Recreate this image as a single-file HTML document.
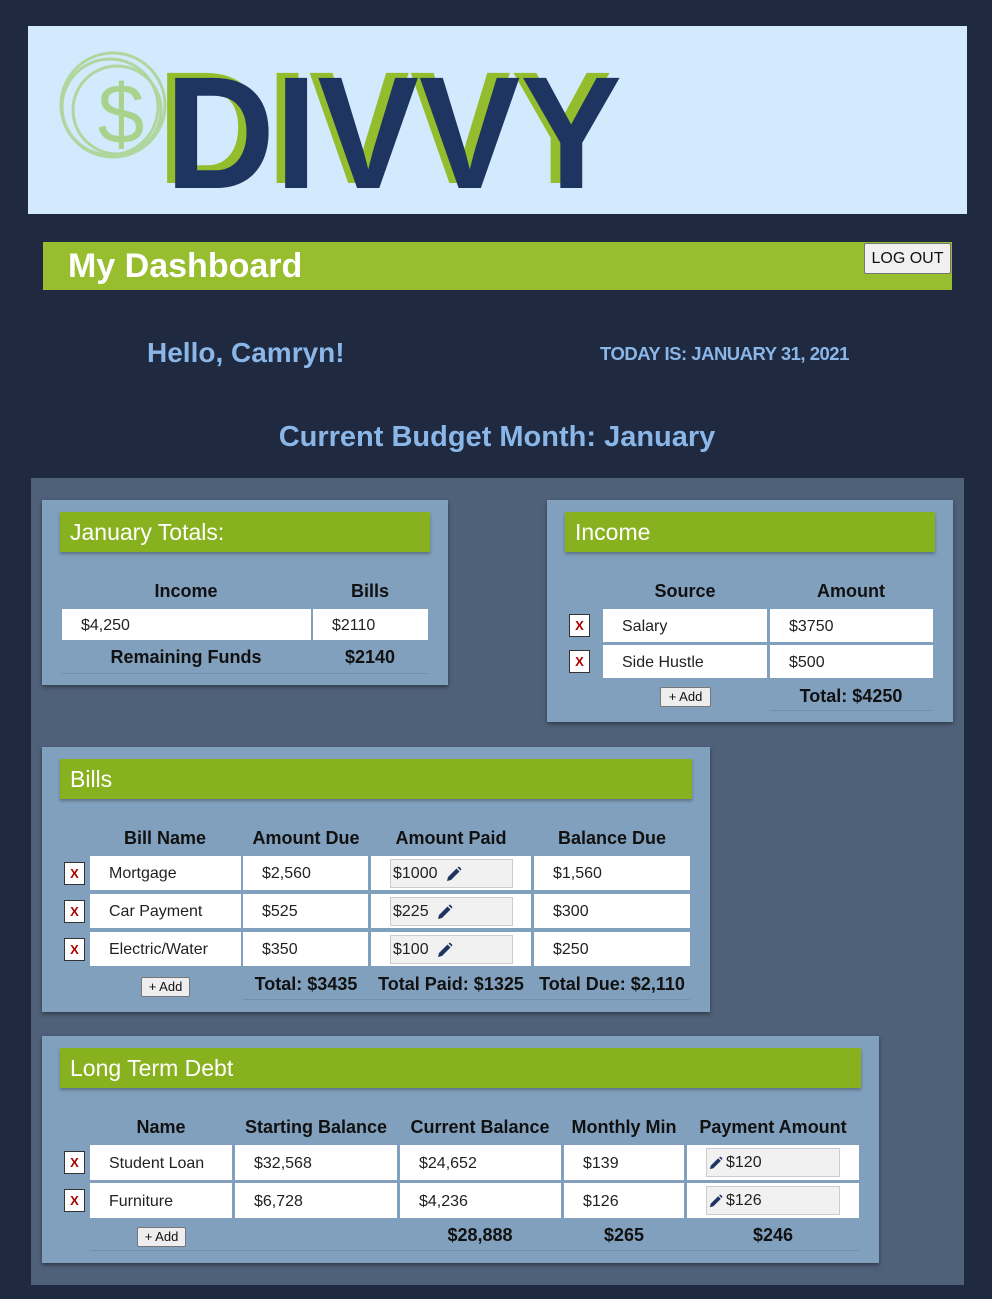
<!DOCTYPE html>
<html><head><meta charset="utf-8"><style>
*{margin:0;padding:0;box-sizing:border-box}
body{width:992px;height:1299px;background:#1f2a40;font-family:"Liberation Sans",sans-serif;position:relative;overflow:hidden}
.a{position:absolute}
.card{position:absolute;background:#81a0bd;box-shadow:0 2px 4px rgba(0,0,0,.4)}
.hd{position:absolute;background:#88b11f;color:#fff;font-size:23px;padding-left:10px;line-height:40px;box-shadow:0 2px 3px rgba(0,0,0,.3)}
.th{position:absolute;font-weight:bold;font-size:18px;color:#111;transform:translateX(-50%);white-space:nowrap}
.cell{position:absolute;background:#fff;font-size:16px;color:#222;padding-left:19px;display:flex;align-items:center;padding-top:2px}
.x{position:absolute;width:21px;height:23px;background:#fff;border:1px solid #333;color:#a00;font-size:13px;text-align:center;line-height:21px;font-weight:bold}
.btn{position:absolute;background:#eee;border:1px solid #777;border-radius:2px;font-size:13px;text-align:center;color:#111}
.inp{position:absolute;background:#f1f1f1;border:1px solid #ccc;font-size:16px;color:#222;display:flex;align-items:center;padding-left:2px}
.tot{position:absolute;font-weight:bold;font-size:18px;color:#111;transform:translateX(-50%);white-space:nowrap}
.line{position:absolute;height:1px;background:#7390ab}
svg.p{width:16px;height:16px;margin-left:8px}
</style></head><body>
<div class="a" style="left:28px;top:26px;width:939px;height:188px;background:#d3e9fd"></div>
<svg class="a" style="left:55px;top:45px" width="120" height="125" viewBox="0 0 120 125">
<g fill="none" stroke="#a9d38d" stroke-width="3" opacity=".85"><circle cx="55" cy="62" r="48"/><circle cx="62" cy="65" r="44"/><circle cx="58" cy="60" r="52"/></g>
<text x="66" y="98" font-size="84" fill="#a9d38d" text-anchor="middle" font-family="Liberation Sans">$</text></svg>
<svg class="a" style="left:0;top:0" width="992" height="220">
<text x="157" y="183" font-family="Liberation Sans" font-weight="bold" font-size="160" textLength="455" lengthAdjust="spacingAndGlyphs" fill="#93bd2c">DIVVY</text>
<text x="165" y="188" font-family="Liberation Sans" font-weight="bold" font-size="160" textLength="457" lengthAdjust="spacingAndGlyphs" fill="#1f3561">DIVVY</text>
</svg>

<div class="a" style="left:43px;top:242px;width:909px;height:48px;background:#96be2e"></div>
<div class="a" style="left:68px;top:245px;font-size:34px;font-weight:bold;color:#fff;line-height:42px">My Dashboard</div>
<div class="btn" style="left:864px;top:243px;width:87px;height:31px;font-size:16px;line-height:29px;background:#f0f0f0">LOG OUT</div>

<div class="a" style="left:147px;top:337px;font-size:28px;color:#8ab6e8;font-weight:bold">Hello, Camryn!</div>
<div class="a" style="left:600px;top:343px;font-size:18.5px;color:#8ab6e8;font-weight:bold;letter-spacing:-.5px">TODAY IS: JANUARY 31, 2021</div>
<div class="a" style="left:0;width:994px;top:421px;font-size:29px;color:#8ab6e8;text-align:center;font-weight:bold">Current Budget Month: January</div>

<div class="a" style="left:31px;top:478px;width:933px;height:807px;background:#4f6079"></div>

<!-- totals -->
<div class="card" style="left:42px;top:500px;width:406px;height:185px"></div>
<div class="hd" style="left:60px;top:512px;width:370px">January Totals:</div>
<div class="th" style="left:186px;top:581px">Income</div>
<div class="th" style="left:370px;top:581px">Bills</div>
<div class="cell" style="left:62px;top:609px;width:249px;height:31px">$4,250</div>
<div class="cell" style="left:313px;top:609px;width:115px;height:31px">$2110</div>
<div class="tot" style="left:186px;top:647px">Remaining Funds</div>
<div class="tot" style="left:370px;top:647px">$2140</div>
<div class="line" style="left:62px;top:673px;width:366px"></div>

<!-- income -->
<div class="card" style="left:547px;top:500px;width:406px;height:222px"></div>
<div class="hd" style="left:565px;top:512px;width:370px">Income</div>
<div class="th" style="left:685px;top:581px">Source</div>
<div class="th" style="left:851px;top:581px">Amount</div>
<div class="x" style="left:569px;top:614px">X</div>
<div class="cell" style="left:603px;top:609px;width:164px;height:33px">Salary</div>
<div class="cell" style="left:770px;top:609px;width:163px;height:33px">$3750</div>
<div class="x" style="left:569px;top:650px">X</div>
<div class="cell" style="left:603px;top:645px;width:164px;height:33px">Side Hustle</div>
<div class="cell" style="left:770px;top:645px;width:163px;height:33px">$500</div>
<div class="btn" style="left:660px;top:687px;width:51px;height:20px;line-height:18px">+ Add</div>
<div class="tot" style="left:851px;top:686px">Total: $4250</div>
<div class="line" style="left:770px;top:710px;width:163px"></div>

<!-- bills -->
<div class="card" style="left:42px;top:747px;width:668px;height:265px"></div>
<div class="hd" style="left:60px;top:759px;width:632px">Bills</div>
<div class="th" style="left:165px;top:828px">Bill Name</div>
<div class="th" style="left:306px;top:828px">Amount Due</div>
<div class="th" style="left:451px;top:828px">Amount Paid</div>
<div class="th" style="left:612px;top:828px">Balance Due</div>

<div class="x" style="left:64px;top:862px">X</div>
<div class="cell" style="left:90px;top:856px;width:151px;height:34px">Mortgage</div>
<div class="cell" style="left:243px;top:856px;width:125px;height:34px">$2,560</div>
<div class="cell" style="left:371px;top:856px;width:160px;height:34px"></div>
<div class="inp" style="left:390px;top:859px;width:123px;height:29px">$1000<svg class="p" viewBox="0 0 16 16"><path d="M1 15l1-4 8.5-8.5 3 3L5 14z M11.5 1.5l1.5-1 2.5 2.5-1 1.5z" fill="#1f3561"/></svg></div>
<div class="cell" style="left:534px;top:856px;width:156px;height:34px">$1,560</div>

<div class="x" style="left:64px;top:900px">X</div>
<div class="cell" style="left:90px;top:894px;width:151px;height:34px">Car Payment</div>
<div class="cell" style="left:243px;top:894px;width:125px;height:34px">$525</div>
<div class="cell" style="left:371px;top:894px;width:160px;height:34px"></div>
<div class="inp" style="left:390px;top:897px;width:123px;height:29px">$225<svg class="p" viewBox="0 0 16 16"><path d="M1 15l1-4 8.5-8.5 3 3L5 14z M11.5 1.5l1.5-1 2.5 2.5-1 1.5z" fill="#1f3561"/></svg></div>
<div class="cell" style="left:534px;top:894px;width:156px;height:34px">$300</div>

<div class="x" style="left:64px;top:938px">X</div>
<div class="cell" style="left:90px;top:932px;width:151px;height:34px">Electric/Water</div>
<div class="cell" style="left:243px;top:932px;width:125px;height:34px">$350</div>
<div class="cell" style="left:371px;top:932px;width:160px;height:34px"></div>
<div class="inp" style="left:390px;top:935px;width:123px;height:29px">$100<svg class="p" viewBox="0 0 16 16"><path d="M1 15l1-4 8.5-8.5 3 3L5 14z M11.5 1.5l1.5-1 2.5 2.5-1 1.5z" fill="#1f3561"/></svg></div>
<div class="cell" style="left:534px;top:932px;width:156px;height:34px">$250</div>

<div class="btn" style="left:141px;top:977px;width:49px;height:20px;line-height:18px">+ Add</div>
<div class="tot" style="left:306px;top:974px">Total: $3435</div>
<div class="tot" style="left:451px;top:974px">Total Paid: $1325</div>
<div class="tot" style="left:612px;top:974px">Total Due: $2,110</div>
<div class="line" style="left:243px;top:999px;width:447px"></div>

<!-- debt -->
<div class="card" style="left:42px;top:1036px;width:837px;height:227px"></div>
<div class="hd" style="left:60px;top:1048px;width:801px">Long Term Debt</div>
<div class="th" style="left:161px;top:1117px">Name</div>
<div class="th" style="left:316px;top:1117px">Starting Balance</div>
<div class="th" style="left:480px;top:1117px">Current Balance</div>
<div class="th" style="left:624px;top:1117px">Monthly Min</div>
<div class="th" style="left:773px;top:1117px">Payment Amount</div>

<div class="x" style="left:64px;top:1151px">X</div>
<div class="cell" style="left:90px;top:1145px;width:142px;height:35px">Student Loan</div>
<div class="cell" style="left:235px;top:1145px;width:162px;height:35px">$32,568</div>
<div class="cell" style="left:400px;top:1145px;width:161px;height:35px">$24,652</div>
<div class="cell" style="left:564px;top:1145px;width:120px;height:35px">$139</div>
<div class="cell" style="left:687px;top:1145px;width:172px;height:35px"></div>
<div class="inp" style="left:706px;top:1148px;width:134px;height:29px"><svg style="width:14px;height:14px;margin-right:3px" viewBox="0 0 16 16"><path d="M1 15l1-4 8.5-8.5 3 3L5 14z M11.5 1.5l1.5-1 2.5 2.5-1 1.5z" fill="#1f3561"/></svg>$120</div>

<div class="x" style="left:64px;top:1189px">X</div>
<div class="cell" style="left:90px;top:1183px;width:142px;height:35px">Furniture</div>
<div class="cell" style="left:235px;top:1183px;width:162px;height:35px">$6,728</div>
<div class="cell" style="left:400px;top:1183px;width:161px;height:35px">$4,236</div>
<div class="cell" style="left:564px;top:1183px;width:120px;height:35px">$126</div>
<div class="cell" style="left:687px;top:1183px;width:172px;height:35px"></div>
<div class="inp" style="left:706px;top:1186px;width:134px;height:29px"><svg style="width:14px;height:14px;margin-right:3px" viewBox="0 0 16 16"><path d="M1 15l1-4 8.5-8.5 3 3L5 14z M11.5 1.5l1.5-1 2.5 2.5-1 1.5z" fill="#1f3561"/></svg>$126</div>

<div class="btn" style="left:137px;top:1227px;width:49px;height:20px;line-height:18px">+ Add</div>
<div class="tot" style="left:480px;top:1225px">$28,888</div>
<div class="tot" style="left:624px;top:1225px">$265</div>
<div class="tot" style="left:773px;top:1225px">$246</div>
<div class="line" style="left:90px;top:1250px;width:769px"></div>
</body></html>
